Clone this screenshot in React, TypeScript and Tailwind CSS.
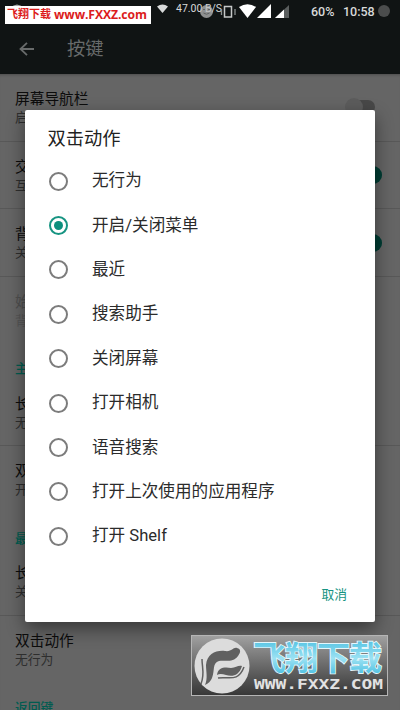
import React, { useState } from "react"
import clsx from "clsx"

interface Preference {
	title: string
	summary: string
	toggle?: 'on' | 'off'
	disabled?: boolean
	divider?: boolean
}

interface Section {
	label?: string
	items: Preference[]
}

const sections: Section[] = [
	{
		items: [
			{ title: '屏幕导航栏', summary: '启用屏幕导航栏', toggle: 'off', divider: true },
			{ title: '交换按键', summary: '互换最近和返回键', toggle: 'on', divider: true },
			{ title: '背光', summary: '关闭', toggle: 'on', divider: true },
			{ title: '始终显示', summary: '背光', disabled: true },
		],
	},
	{
		label: '主屏幕键',
		items: [
			{ title: '长按动作', summary: '无行为', divider: true },
			{ title: '双击动作', summary: '开启/关闭菜单' },
		],
	},
	{
		label: '最近键',
		items: [
			{ title: '长按动作', summary: '关闭屏幕', divider: true },
			{ title: '双击动作', summary: '无行为' },
		],
	},
	{ label: '返回键', items: [] },
]

const options = ['无行为', '开启/关闭菜单', '最近', '搜索助手', '关闭屏幕', '打开相机', '语音搜索', '打开上次使用的应用程序', '打开 Shelf']

const StatusBar: React.FC = () => (
	<div className="relative flex h-6 items-start text-[#d8dada]">
		<svg className="absolute left-[9px] top-[3px]" width="16" height="6" viewBox="0 0 16 6">
			<path d="M1 5Q8-2 15 5Z" fill="#a5a8a8" />
		</svg>
		<div className="absolute left-[5px] top-[6px] flex h-[18px] w-[146px] items-center gap-[3px] bg-white pl-[2px] whitespace-nowrap text-[#dc1c1c]">
			<span className="text-[11px] leading-[18px] font-bold">飞翔下载</span>
			<span className="font-['Open_Sans'] text-[12.2px] leading-[18px] font-bold" style={{ letterSpacing: '-0.1px' }}>www.FXXZ.com</span>
		</div>
		<svg className="mt-1 ml-[157px] shrink-0" width="11" height="9" viewBox="0 0 11 9">
			<path d="M0 2.5Q5.500-1.500 11 2.500L5.500 9Z" fill="currentColor" />
		</svg>
		<span className="mt-[3px] ml-2 w-[50px] shrink-0 text-[10.5px] leading-3 whitespace-nowrap">47.00 B/S</span>
		<svg className="absolute left-[199px] top-[4px]" width="38" height="15" viewBox="0 0 38 15">
			<circle cx="7.500" cy="7.500" r="6.500" fill="#b9bbbb" fillOpacity=".75" />
			<path d="M4 5.500h2M9 5.500h2M4.500 9q3 2.500 6 0" stroke="#606464" fill="none" />
			<rect x="25.500" y="2.500" width="7" height="10.500" fill="#101414" stroke="#c5c8c8" strokeWidth="1.500" />
			<path d="M22.500 5v6M36 5v6" stroke="#8d9191" strokeWidth="1.300" />
		</svg>
		<svg className="mt-1 ml-[13px] shrink-0" width="17" height="14" viewBox="0 0 17 14">
			<path d="M0 3Q8.500-2.500 17 3L8.500 14Z" fill="#fff" />
		</svg>
		<svg className="mt-1 ml-[1px] shrink-0" width="14" height="14" viewBox="0 0 14 14">
			<path d="M14 0V14H0Z" fill="#fff" />
		</svg>
		<svg className="mt-[5px] ml-1 shrink-0" width="14" height="13" viewBox="0 0 14 13">
			<path d="M14 0V13H0Z" fill="#5a5e5e" />
			<path d="M9 4.600V13H0Z" fill="#fff" />
		</svg>
		<span className="mt-[4px] ml-[22px] w-[32px] shrink-0 text-[12.5px] leading-4 font-medium">60%</span>
		<span className="mt-[4px] w-[35px] shrink-0 text-[12.5px] leading-4 font-medium">10:58</span>
		<span className="mt-[5px] size-3 shrink-0 rounded-full bg-[#4b4d4d]" />
	</div>
)

const Toggle: React.FC<{ on: boolean }> = ({ on }) => (
	<div className={clsx('flex w-[37px] items-center', on ? 'justify-end' : 'justify-start')}>
		<div className={clsx('flex h-3.5 items-center rounded-full', on ? 'w-[30px] justify-end bg-[#3c5f5a]' : 'ml-1 w-[26px] bg-[#484848]')}>
			<span className={clsx('size-[18px] shrink-0 rounded-full', on ? 'bg-[#003d34]' : '-ml-1 bg-[#5c5c5c]')} />
		</div>
	</div>
)

const PreferenceRow: React.FC<{ item: Preference }> = ({ item }) => (
	<div className={clsx('flex h-[67.700px] justify-between border-b pr-[18px] pl-[15px]', item.divider ? 'border-[#585858]' : 'border-transparent')}>
		<div className="flex flex-col pt-4">
			<span className={clsx('text-[14.700px] leading-[19px]', item.disabled ? 'text-[#4f4f4f]' : 'text-[#0c0c0c]')}>{item.title}</span>
			<span className={clsx('text-[12.800px] leading-[18px]', item.disabled ? 'text-[#555]' : 'text-[#2e2e2e]')}>{item.summary}</span>
		</div>
		{item.toggle && <Toggle on={item.toggle === 'on'} />}
	</div>
)

const Logo: React.FC = () => (
	<svg className="shrink-0" width="56" height="56" viewBox="0 0 56 56">
		<circle cx="28" cy="28" r="27.500" fill="#dcdcdc" />
		<path d="M11 47C14 40 12 34 12 27C13 16 22 12 31 13C38 14 39 9 43 10C47 11 47 14 44 18C39 25 31 22 25 23C18 25 21 32 18 40Q16 45 11 47Z" fill="#606060" />
		<path d="M23 37C24 29 31 29 37 30C42 30 44 27 48 28C45 38 38 39 32 37Q26 35 23 37Z" fill="#606060" />
		<path d="M8 21C8 30 11 36 7 46M24 40C34 38 44 45 50 29" stroke="#606060" strokeWidth="1.500" fill="none" />
	</svg>
)

const Watermark: React.FC = () => (
	<div className="absolute top-[635px] left-[191px] flex h-[61px] w-[197px] items-center overflow-hidden border border-[#b5b5b5] bg-linear-to-b from-[#a0a0a0] to-[#383838] pl-[2px]">
		<Logo />
		<div className="flex flex-col pl-[3px]">
			<svg width="131" height="36" viewBox="0 0 131 36">
				<defs>
					<linearGradient id="sky" x1="0" y1="0" x2="0" y2="1">
						<stop offset="0" stopColor="#35b5dc" />
						<stop offset=".55" stopColor="#9ce2f3" />
						<stop offset="1" stopColor="#35b5dc" />
					</linearGradient>
				</defs>
				<text x="0" y="30" textLength="129" fontSize="33" fontWeight="700" fontFamily="Noto Sans CJK SC, sans-serif" fill="url(#sky)" stroke="#e4f7fc" strokeWidth="1.800" paintOrder="stroke">飞翔下载</text>
			</svg>
			<svg width="131" height="16" viewBox="0 0 131 16">
				<text x="1" y="13" textLength="129" lengthAdjust="spacingAndGlyphs" fontSize="14" fontWeight="700" fontFamily="DejaVu Sans Mono, monospace" fill="#e2e2e2">WWW.FXXZ.COM</text>
			</svg>
		</div>
	</div>
)

export default function App() {
	const [selected, setSelected] = useState(1)

	return (
		<div className="relative h-[710px] w-[400px] overflow-hidden bg-[#656565] font-[Roboto,'Noto_Sans_CJK_SC',sans-serif]" lang="zh-CN">
			<header className="h-[74px] bg-[#101414]">
				<StatusBar />
				<div className="flex h-[50px] items-center pl-[19px] text-[#686b6b]">
					<svg width="15" height="14" viewBox="0 0 15 14" fill="none" stroke="currentColor" strokeWidth="1.800">
						<path d="M15 7H1.500M8 .8L1.500 7L8 13.200" />
					</svg>
					<h1 className="ml-[33px] text-[18.300px] leading-6">按键</h1>
				</div>
			</header>

			<main className="shadow-[inset_0_3px_3px_-2px_rgba(0,0,0,0.25)]">
				{sections.map((section, i) => (
					<section key={i}>
						{section.label && (
							<h2 className="flex h-[34px] items-center pt-[15px] pl-[15px] text-[12.800px] leading-[18px] font-medium text-[#005c50]">{section.label}</h2>
						)}
						{section.items.map((item) => <PreferenceRow key={item.title} item={item} />)}
					</section>
				))}
			</main>

			<div role="dialog" className="absolute top-[110px] left-[25px] flex h-[512px] w-[350px] flex-col rounded-[2px] bg-white shadow-[0_7px_18px_rgba(0,0,0,0.45)]">
				<h2 className="h-[49px] pt-[17px] pl-[22.500px] text-[18.300px] leading-6 text-[#222]">双击动作</h2>
				<div className="flex flex-col">
					{options.map((option, i) => (
						<button key={option} onClick={() => setSelected(i)} className="flex h-[44.400px] items-center pl-6 text-left">
							<span className={clsx('flex size-[19px] items-center justify-center rounded-full border-2', selected === i ? 'border-[#179482]' : 'border-[#7c7c7c]')}>
								{selected === i && <span className="size-[9px] rounded-full bg-[#0c8f7d]" />}
							</span>
							<span className="ml-6 text-[16.600px] leading-6 text-[#2b2b2b]">{option}</span>
						</button>
					))}
				</div>
				<button className="mt-[26px] mr-7 self-end text-[12.800px] leading-5 text-[#179482]">取消</button>
			</div>

			<Watermark />
		</div>
	)
}
